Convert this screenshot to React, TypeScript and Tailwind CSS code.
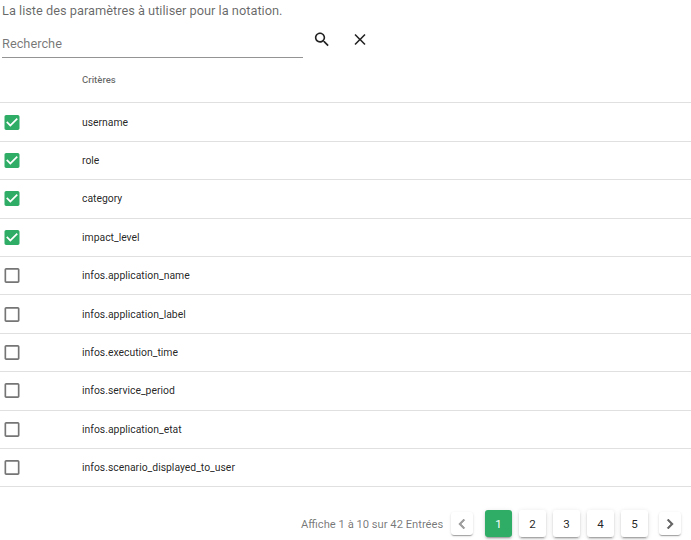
import React from "react";

const rows = [
  { name: "username", checked: true, box: "h-[39px] pt-px" },
  { name: "role", checked: true, box: "h-[38px]" },
  { name: "category", checked: true, box: "h-[39px]" },
  { name: "impact_level", checked: true, box: "h-[38px]" },
  { name: "infos.application_name", checked: false, box: "h-[38px]" },
  { name: "infos.application_label", checked: false, box: "h-[39px] pt-px" },
  { name: "infos.execution_time", checked: false, box: "h-[38px]" },
  { name: "infos.service_period", checked: false, box: "h-[39px]" },
  { name: "infos.application_etat", checked: false, box: "h-[38px]" },
  { name: "infos.scenario_displayed_to_user", checked: false, box: "h-[38px]" },
];

const CHECKED = "M19 3H5c-1.11 0-2 .9-2 2v14c0 1.1.89 2 2 2h14c1.11 0 2-.9 2-2V5c0-1.1-.89-2-2-2zm-9 14l-5-5 1.41-1.41L10 14.17l7.59-7.59L19 8l-9 9z";
const BLANK = "M19 5v14H5V5h14m0-2H5c-1.1 0-2 .9-2 2v14c0 1.1.9 2 2 2h14c1.1 0 2-.9 2-2V5c0-1.1-.9-2-2-2z";
const SEARCH = "M15.5 14h-.79l-.28-.27C15.41 12.59 16 11.11 16 9.5 16 5.91 13.09 3 9.5 3S3 5.91 3 9.5 5.91 16 9.5 16c1.61 0 3.09-.59 4.23-1.57l.27.28v.79l5 4.99L20.49 19l-4.99-5zm-6 0C7.01 14 5 11.99 5 9.5S7.01 5 9.5 5 14 7.01 14 9.5 11.99 14 9.5 14z";
const CLOSE = "M19 6.41L17.59 5 12 10.59 6.41 5 5 6.41 10.59 12 5 17.59 6.41 19 12 13.41 17.59 19 19 17.59 13.41 12z";
const LEFT = "M15.41 7.41L14 6l-6 6 6 6 1.41-1.41L10.83 12z";
const RIGHT = "M10 6L8.59 7.41 13.17 12l-4.58 4.59L10 18l6-6z";

function Icon({ d, className, viewBox = "0 0 24 24" }: { d: string; className: string; viewBox?: string }) {
  return (
    <svg viewBox={viewBox} fill="currentColor" className={"block shrink-0 " + className}>
      <path d={d} />
    </svg>
  );
}

const raised =
  "shadow-[0_3px_1px_-2px_rgba(0,0,0,0.2),0_2px_2px_0_rgba(0,0,0,0.14),0_1px_5px_0_rgba(0,0,0,0.12)]";
const flat =
  "shadow-[0_2px_1px_-1px_rgba(0,0,0,0.2),0_1px_1px_0_rgba(0,0,0,0.14),0_1px_3px_0_rgba(0,0,0,0.12)]";
const pageBase = "flex h-[27px] w-[27px] items-center justify-center rounded-[3px] pt-[2px] text-[11.6px] " + raised;
const arrowBase = "flex h-[23px] w-[22px] items-center justify-center rounded-[3px] " + flat;

export default function App() {
  return (
    <div className="h-[540px] w-[691px] overflow-hidden bg-white font-[Roboto,sans-serif] text-black/87">
      <p className="h-[22px] pl-[2px] text-[12.8px] leading-[22px] text-black/60">
        La liste des paramètres à utiliser pour la notation.
      </p>
      <div className="flex h-[36px] pl-[2px]">
        <div className="flex w-[301px] items-center border-b border-black/42 pt-[8px] text-[12.8px] text-black/55">Recherche</div>
        <button className="ml-[9px] mt-[8px] h-[19px]"><Icon d={SEARCH} className="h-[19px] w-[20px]" /></button>
        <button className="ml-[18px] mt-[8px] h-[19px]"><Icon d={CLOSE} className="h-[19px] w-[20px]" /></button>
      </div>
      <div className="flex h-[45px] items-center border-b border-black/12 pl-[82px] text-[9.6px] font-medium text-black/60">Critères</div>
      {rows.map((r) => (
        <div key={r.name} className={"flex items-start border-b border-black/12 " + r.box}>
          <div className="w-[82px] pl-[4px] pt-[11px]">
            <Icon
              d={r.checked ? CHECKED : BLANK}
              viewBox="2.4 3 19.2 18"
              className={"h-[15px] w-[16px] " + (r.checked ? "text-[#2fac66]" : "text-black/54")}
            />
          </div>
          <span className="h-[38px] text-[10.4px] leading-[38px]">{r.name}</span>
        </div>
      ))}
      <div className="flex items-center pt-[23px]">
        <span className="ml-[301px] w-[150px] whitespace-nowrap pt-[4px] text-[11.2px] text-black/55">Affiche 1 à 10 sur 42 Entrées</span>
        <button className={arrowBase + " text-black/38"}><Icon d={LEFT} className="h-[20px] w-[20px] stroke-current [stroke-width:0.5]" /></button>
        <div className="ml-[12px] mr-[11px] flex gap-[7px]">
          <button className={pageBase + " bg-[#2fac66] text-white"}>1</button>
          {[2, 3, 4, 5].map((n) => <button key={n} className={pageBase}>{n}</button>)}
        </div>
        <button className={arrowBase + " text-black/60"}><Icon d={RIGHT} className="h-[20px] w-[20px] stroke-current [stroke-width:0.5]" /></button>
      </div>
    </div>
  );
}
